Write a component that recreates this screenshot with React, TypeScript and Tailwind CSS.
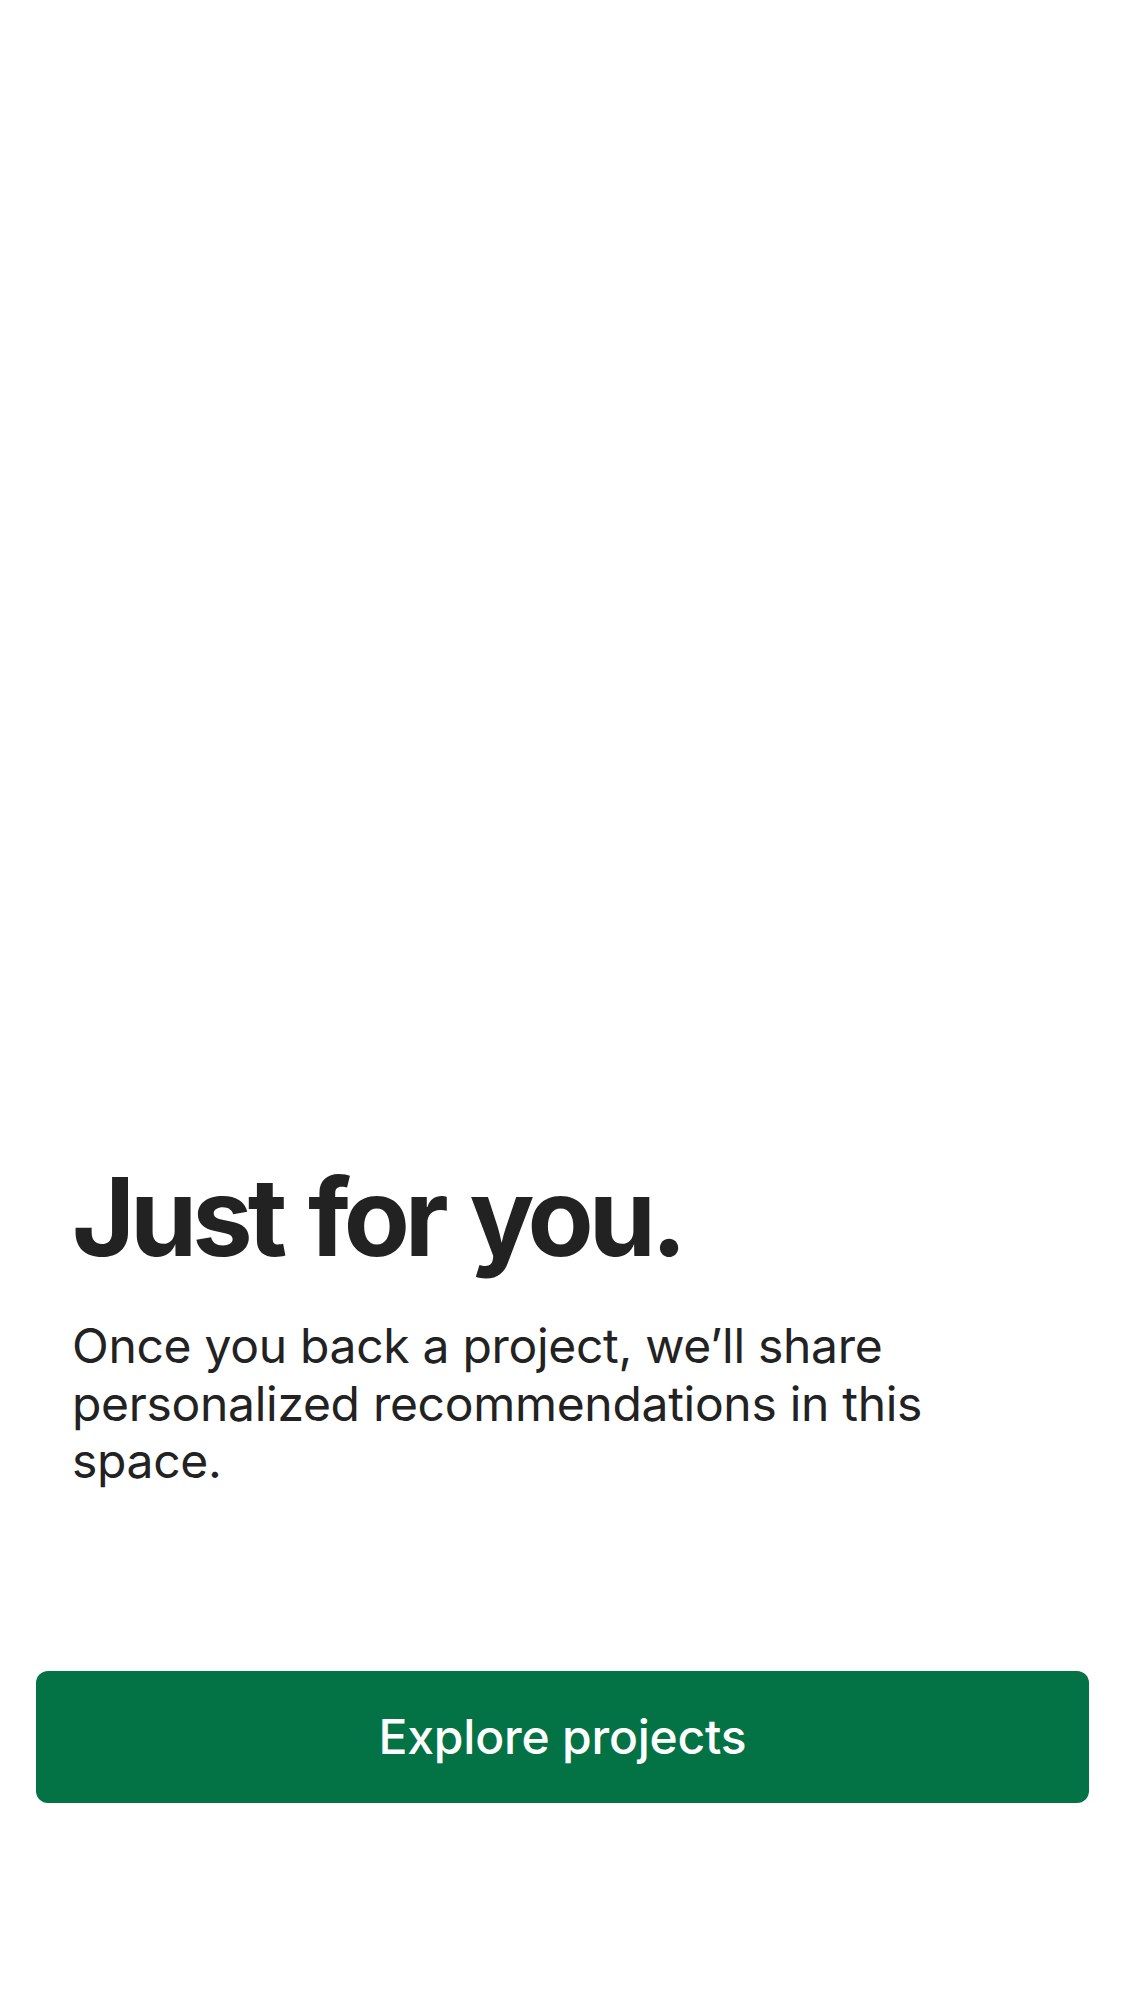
import React from "react";

export default function App() {
  return (
    <div
      className="w-[1125px] h-[2001px] bg-white flex flex-col justify-end pb-[198px] text-[#222222]"
      style={{ fontFamily: "Inter, 'Noto Sans', sans-serif" }}
    >
      <div className="px-[72px]">
        <h1 className="text-[108px] leading-[129.6px] font-bold tracking-[-5px] [word-spacing:5px]">Just for you.</h1>
        <p className="mt-[36px] text-[48px] leading-[57.6px] font-normal tracking-[-0.3px]">
          Once you back a project, we’ll share personalized recommendations in this space.
        </p>
      </div>
      <div className="px-[36px] mt-[181px]">
        <button className="w-full h-[132px] rounded-[12px] bg-[#037245] text-white text-[48px] font-medium tracking-[-0.2px] flex items-center justify-center">
          Explore projects
        </button>
      </div>
    </div>
  );
}
